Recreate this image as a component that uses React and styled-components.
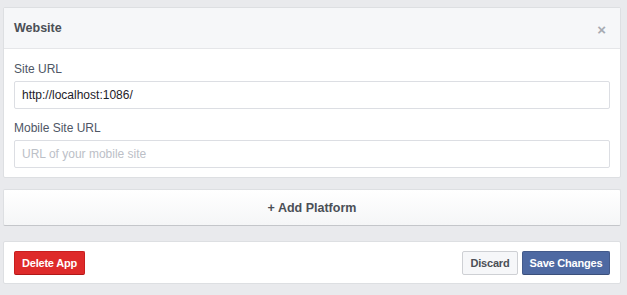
import React from "react";
import styled, { createGlobalStyle } from "styled-components";

const Global = createGlobalStyle`
  html, body { margin: 0; padding: 0; background: #e9eaed; }
  body { font-family: "Liberation Sans", Arial, Helvetica, sans-serif; font-size: 12px; color: #4e5665; }
`;

const Page = styled.div`
  padding: 7px 6px 12px 3px;
  display: flex;
  flex-direction: column;
`;

const Card = styled.section`
  background: #fff;
  border: 1px solid #dddfe2;
  border-radius: 2px;
  margin-bottom: ${(p) => p.$gap || 0}px;
`;

const Header = styled.div`
  height: 40px;
  background: #f6f7f9;
  border-bottom: 1px solid #e5e6e9;
  display: flex;
  align-items: center;
  justify-content: space-between;
  padding: 0 10px;
`;

const Title = styled.h3`
  margin: 0;
  font-size: 12.5px;
  font-weight: bold;
  color: #4b4f56;
`;

const Close = styled.span`
  color: #a7abb3;
  font-size: 15px;
  font-weight: bold;
  line-height: 1;
  margin-right: 4px;
  margin-top: 2px;
`;

const Body = styled.div`
  padding: 12px 10px 9px;
  display: flex;
  flex-direction: column;
`;

const Label = styled.label`
  display: block;
  line-height: 16px;
  font-size: 12px;
  color: #4e5665;
  margin: ${(p) => (p.$first ? "0" : "11px")} 0 4px;
`;

const Input = styled.input`
  box-sizing: border-box;
  width: 100%;
  height: 28px;
  border: 1px solid #dcdee3;
  border-radius: 2px;
  padding: 0 7px;
  font-family: "Liberation Sans", Arial, sans-serif;
  font-size: 12px;
  color: #1d2129;
  outline: none;
  &::placeholder { color: #bcc0c7; }
`;

const AddCard = styled.button`
  height: 37px;
  width: 100%;
  border: 1px solid #dddfe2;
  border-bottom-color: #c4c6ca;
  border-radius: 2px;
  background: linear-gradient(#ffffff, #f5f6f7);
  font-family: "Liberation Sans", Arial, sans-serif;
  font-size: 12.5px;
  font-weight: bold;
  color: #4b4f56;
  margin-bottom: 15px;
  cursor: pointer;
`;

const Footer = styled.div`
  padding: 9px 10px 8px;
  display: flex;
  align-items: center;
  gap: 4px;
`;

const Spacer = styled.div`
  flex: 1;
`;

const Btn = styled.button`
  box-sizing: border-box;
  height: 24px;
  width: ${(p) => p.$w}px;
  padding: 0;
  border-radius: 2px;
  font-family: "Liberation Sans", Arial, sans-serif;
  font-size: 11px;
  letter-spacing: -0.2px;
  font-weight: bold;
  cursor: pointer;
  border: 1px solid;
  ${(p) =>
    p.$variant === "danger"
      ? `background:#de2a2a;border-color:#c81e1e #c81e1e #b01818;color:#fff;`
      : p.$variant === "primary"
      ? `background:#4e69a2;border-color:#435a8b #435a8b #3b4f7a;color:#fff;`
      : `background:#f6f7f9;border-color:#ced0d4;color:#4b4f56;`}
`;

export default function App() {
  return (
    <>
      <Global />
      <Page>
        <Card $gap={11}>
          <Header>
            <Title>Website</Title>
            <Close>×</Close>
          </Header>
          <Body>
            <Label $first>Site URL</Label>
            <Input defaultValue="http://localhost:1086/" />
            <Label>Mobile Site URL</Label>
            <Input placeholder="URL of your mobile site" />
          </Body>
        </Card>
        <AddCard>+ Add Platform</AddCard>
        <Card>
          <Footer>
            <Btn $variant="danger" $w={71}>Delete App</Btn>
            <Spacer />
            <Btn $w={56}>Discard</Btn>
            <Btn $variant="primary" $w={88}>Save Changes</Btn>
          </Footer>
        </Card>
      </Page>
    </>
  );
}
